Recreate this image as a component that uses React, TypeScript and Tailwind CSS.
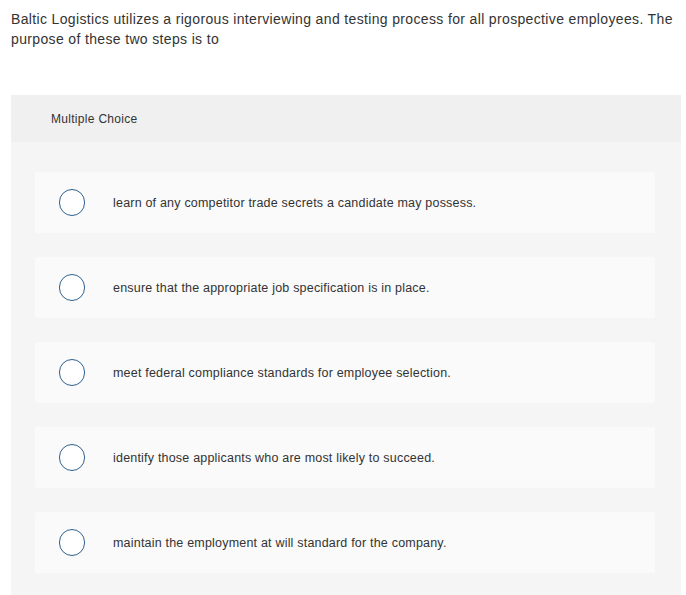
const choices = [
  "learn of any competitor trade secrets a candidate may possess.",
  "ensure that the appropriate job specification is in place.",
  "meet federal compliance standards for employee selection.",
  "identify those applicants who are most likely to succeed.",
  "maintain the employment at will standard for the company.",
];

// 문제 본문 + 객관식 보기 패널
export default function App() {
  return (
    <div className="h-[595px] overflow-hidden bg-white font-['Liberation_Sans',Arial,sans-serif] text-[#333]">
      <p className="px-[11px] pt-[9px] text-[14px] leading-[20px] tracking-[0.35px] text-[#333]">
        Baltic Logistics utilizes a rigorous interviewing and testing process for all prospective employees. The
        purpose of these two steps is to
      </p>

      <section className="mx-[11px] mt-[46px] mr-[5px] bg-[#f5f5f5]">
        <div className="flex h-[47px] items-center bg-[#f0f0f0] pl-[40px] text-[12px] tracking-[0.3px] text-[#333]">
          Multiple Choice
        </div>

        <div className="flex flex-col gap-[24px] pt-[30px] pb-[30px] pl-[24px] pr-[26px]">
          {choices.map((c) => (
            <label
              key={c}
              className="flex h-[61px] items-center rounded-[3px] bg-[#fafafa] pl-[24px]"
            >
              <span className="block h-[27px] w-[26px] shrink-0 rounded-full border-[1.5px] border-[#2f5f8f] bg-white" />
              <span className="ml-[28px] pt-[2px] text-[12.5px] tracking-[0.2px] text-[#333]">{c}</span>
            </label>
          ))}
        </div>
      </section>
    </div>
  );
}
